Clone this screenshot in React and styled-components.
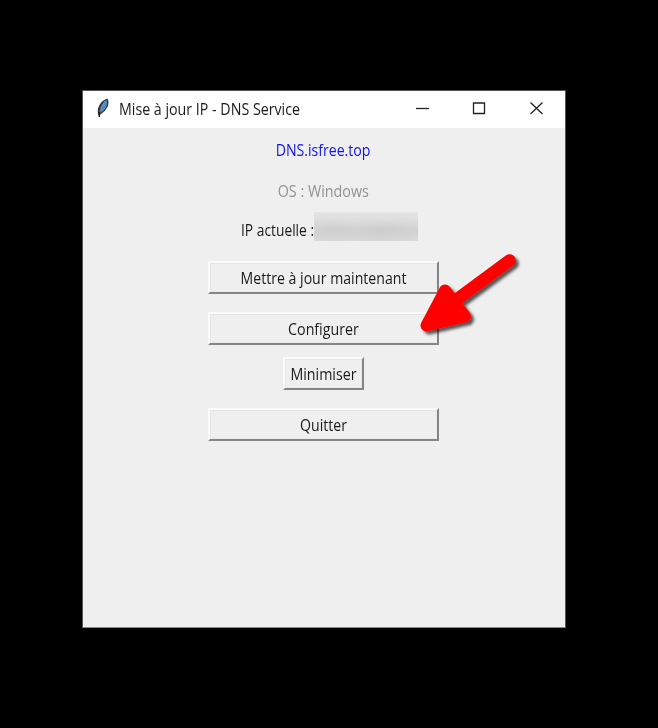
import React from "react";
import styled, { createGlobalStyle } from "styled-components";

const GlobalStyle = createGlobalStyle`
  *, *::before, *::after { box-sizing: border-box; }
  html, body { margin: 0; background: #000; }
  body { overflow: hidden; font-family: "Open Sans", "Noto Sans", sans-serif; }
`;

const Desktop = styled.main`
  width: 658px;
  height: 728px;
  padding: 90px 0 0 82px;
  background: #000;
`;

const Window = styled.section`
  position: relative;
  display: flex;
  flex-direction: column;
  width: 484px;
  height: 538px;
  background: #efefef;
  border: 1px solid #555;
  border-bottom-color: #888;
`;

const TitleBar = styled.header`
  display: flex;
  align-items: center;
  flex: none;
  height: 37px;
  padding-left: 12px;
  background: #fff;
`;

const Feather = styled.svg`
  width: 16px;
  height: 22px;
  flex: none;
  margin-top: -3px;
`;

const Label = styled.span`
  display: block;
  white-space: nowrap;
  font-size: 15.5px;
  font-weight: 430;
  line-height: 22px;
  color: ${(p) => p.$color || "#1a1a1a"};
  transform: scaleX(${(p) => p.$fit || 0.91});
  transform-origin: ${(p) => p.$origin || "center"};
`;

const Title = styled.h1`
  flex: 1;
  margin: -2px 0 0 8px;
  font-weight: 400;
`;

const Controls = styled.svg`
  width: 150px;
  height: 37px;
  flex: none;
`;

const Content = styled.div`
  display: flex;
  flex-direction: column;
  align-items: center;
  padding: 11px 2px 0 0;
`;

const System = styled.div`
  margin-top: 19px;
`;

const Address = styled.div`
  display: flex;
  align-items: center;
  align-self: flex-start;
  height: 30px;
  margin: 9px 0 0 158px;
`;

const AddressLabel = styled.div`
  width: 73px;
  margin-top: 7px;
`;

const Redacted = styled.div`
  width: 104px;
  height: 29px;
  background:
    radial-gradient(ellipse 24px 12px at 19% 65%, #cbcbcb90, transparent),
    radial-gradient(ellipse 45px 12px at 65% 67%, #c9c9c990, transparent),
    linear-gradient(#e5e5e5, #dcdcdc 30%, #d3d3d3 62%, #d9d9d9);
`;

const Button = styled.button`
  width: ${(p) => p.$width || 231}px;
  height: 33px;
  margin: ${(p) => p.$gap}px 0 0;
  padding: 0;
  border: 2px solid;
  border-color: #fafafa #858585 #858585 #fafafa;
  background: #efefef;
  box-shadow: inset 1px 1px #e6e6e6, inset -1px -1px #e9e9e9;
  font: inherit;
`;

const Pointer = styled.svg`
  position: absolute;
  left: 327px;
  top: 155px;
  width: 130px;
  height: 105px;
  pointer-events: none;
`;

export default function App() {
  return (
    <Desktop>
      <GlobalStyle />
      <Window>
        <TitleBar>
          <Feather viewBox="0 0 16 22">
            <path d="M3.5 18 Q1.5 13 4.5 8 Q7 3 12.5 1.5 Q14.5 5 12.5 10 Q10 15 5.5 17.5Z" fill="#303a46" />
            <path d="M6 14 Q6 8 11.5 3 Q13 7 10 12 L7 15Z" fill="#4a8bd3" />
            <path d="M10.5 3.5 Q5.5 9 4.2 18" fill="none" stroke="#aeb9c4" strokeWidth="0.7" />
            <path d="M4 15 L4.4 20" stroke="#151515" strokeWidth="1.5" />
          </Feather>
          <Title><Label $origin="left" $fit={0.918}>Mise à jour IP - DNS Service</Label></Title>
          <Controls viewBox="0 0 150 37" fill="none" stroke="#222" strokeWidth="1.3">
            <path d="M1 17.5H14" />
            <path d="M58.5 12H69.5V22.5H58.5Z" />
            <path d="M115.5 11.5L127.5 23M127.5 11.5L115.5 23" />
          </Controls>
        </TitleBar>
        <Content>
          <Label $color="#1111f5">DNS.isfree.top</Label>
          <System><Label $color="#929292" $fit={0.925}>OS : Windows</Label></System>
          <Address>
            <AddressLabel><Label $origin="left" $fit={0.89}>IP actuelle :</Label></AddressLabel>
            <Redacted />
          </Address>
          <Button $gap={20}><Label>Mettre à jour maintenant</Label></Button>
          <Button $gap={18}><Label $fit={0.92}>Configurer</Label></Button>
          <Button $gap={12} $width={81}><Label $fit={0.92}>Minimiser</Label></Button>
          <Button $gap={18}><Label>Quitter</Label></Button>
        </Content>
        <Pointer viewBox="410 245.5 130 105">
          <defs>
            <filter id="arrowShadow" x="-20%" y="-20%" width="150%" height="150%">
              <feDropShadow dx="3" dy="3" stdDeviation="1.7" floodColor="#000" floodOpacity="0.65" />
            </filter>
          </defs>
          <g filter="url(#arrowShadow)" fill="#f00" stroke="#f00" strokeLinecap="round" strokeLinejoin="round">
            <path d="M509.5 260L454 301" strokeWidth="12.5" />
            <path d="M426.5 325L445 290L465 316Z" strokeWidth="12" />
          </g>
        </Pointer>
      </Window>
    </Desktop>
  );
}
